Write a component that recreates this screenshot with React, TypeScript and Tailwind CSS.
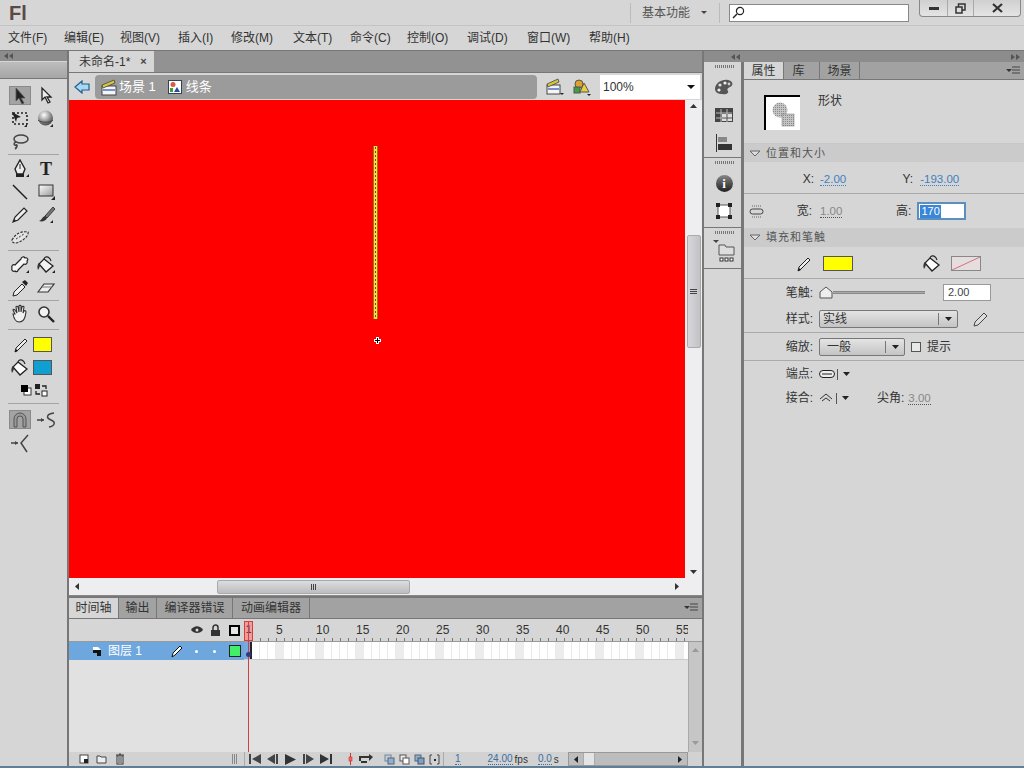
import React from "react";

const FONT = "font-['Liberation_Sans','Noto_Sans_CJK_SC',sans-serif]";

const S = ({ w = 20, h = 20, children, className = "" }: { w?: number; h?: number; children: React.ReactNode; className?: string }) => (
  <svg width={w} height={h} viewBox={`0 0 ${w} ${h}`} className={`shrink-0 ${className}`}>{children}</svg>
);
const Corner = () => <path d="M17 15l0 3-3 0z" fill="#222" />;

const Arrow = ({ fill = "#222" }: { fill?: string }) => (
  <S><path d="M6 2l0 13 3-3 3 6 2-1-3-5 4 0z" fill={fill} stroke="#555" strokeWidth=".8" /></S>
);
const Sub = () => <S><path d="M6 2l0 12 3-3 3 6 2-1-3-5 4 0z" fill="#eee" stroke="#222" strokeWidth="1.3" /></S>;
const Free = () => (
  <S>
    <rect x="3" y="4" width="14" height="11" fill="none" stroke="#222" strokeWidth="1.6" strokeDasharray="2 2" />
    <path d="M2 3l9 5-4 1-1 4z" fill="#222" /><Corner />
  </S>
);
const Ball = () => (
  <S>
    <defs><radialGradient id="bl" cx=".4" cy=".3" r=".8"><stop offset="0" stopColor="#fff" /><stop offset="1" stopColor="#333" /></radialGradient></defs>
    <circle cx="9.5" cy="9" r="7.5" fill="url(#bl)" /><path d="M2 11c3 3 12 3 15 0" fill="none" stroke="#444" /><Corner />
  </S>
);
const Lasso = () => <S><ellipse cx="11" cy="7" rx="7" ry="4" fill="none" stroke="#444" strokeWidth="1.5" /><path d="M6 10c-3 1-2 4 0 3s1 3-1 4" fill="none" stroke="#444" strokeWidth="1.5" /></S>;
const Pen = () => <S><path d="M10 1l5 9-2 5H7l-2-5z" fill="#eee" stroke="#222" strokeWidth="1.4" /><path d="M10 5v5" stroke="#222" /><rect x="6" y="15" width="8" height="3" fill="#222" /><path d="M19 15l0 3-3 0z" fill="#222" /></S>;
const Line = () => <S><path d="M3 3l14 14" stroke="#222" strokeWidth="1.5" /></S>;
const Rect = () => (
  <S>
    <defs><linearGradient id="rc" x1="0" y1="0" x2="1" y2="1"><stop offset="0" stopColor="#fff" /><stop offset="1" stopColor="#999" /></linearGradient></defs>
    <rect x="3" y="3" width="14" height="11" fill="url(#rc)" stroke="#333" /><path d="M19 14l0 4-4 0z" fill="#222" />
  </S>
);
const Pencil = () => <S><path d="M3 17l2-5 9-9 3 3-9 9z" fill="#eee" stroke="#222" strokeWidth="1.2" /><path d="M3 17l1.5-3 1.5 1.5z" fill="#222" /></S>;
const Brush = () => <S><path d="M17 2l-8 9 2 2 8-9z" fill="#777" stroke="#222" strokeWidth=".8" /><path d="M9 11c-3 1-3 4-6 5 3 1 7 0 8-3z" fill="#333" /><Corner /></S>;
const Deco = () => <S><path d="M2 12C6 5 12 3 18 4c1 3-4 9-12 11-2 0-4 0-4-3z" fill="#e4e4e4" stroke="#333" strokeWidth="1.2" strokeDasharray="2.5 1.3" /><path d="M6 11l8-5" stroke="#333" strokeDasharray="2 1.5" /></S>;
const Bone = () => (
  <S>
    <path d="M5 16c-2 1-4-1-3-3-1-2 1-4 3-3l6-6c0-2 3-3 4-1 2-1 4 2 2 3 1 2-1 4-3 3l-6 6c0 2-2 2-3 1z" fill="#f6f6f6" stroke="#222" strokeWidth="1.2" />
    <path d="M19 15l0 3-3 0z" fill="#222" />
  </S>
);
const Bucket = ({ c = "#f2f2f2", corner = true }: { c?: string; corner?: boolean }) => (
  <S>
    <path d="M8 6c-1-5 5-6 7 0" fill="none" stroke="#222" strokeWidth="1.1" />
    <path d="M8 4l9 7-7 6-7-8z" fill={c} stroke="#222" strokeWidth="1.3" />
    <path d="M3 8c-2 2-2 4-1 7 1-2 2-3 2-5z" fill="#333" />
    {corner && <path d="M19 15l0 3-3 0z" fill="#222" />}
  </S>
);
const Dropper = () => <S><path d="M3 18l1-4 8-8 3 3-8 8z" fill="#eee" stroke="#222" /><path d="M12 4l4 4 2-3-3-3z" fill="#222" /></S>;
const Eraser = () => <S><path d="M2 14l6-8h10l-6 8z" fill="#eee" stroke="#333" strokeWidth="1.2" /><path d="M6 9h10" stroke="#777" /></S>;
const Hand = () => <S><path d="M5 10L3 6c0-1 1-1 2 0l2 3-1-6c0-1 1-1 2 0l1 5V2c0-1 2-1 2 0v6l1-5c0-1 2-1 2 0l-1 6 1-2c1-1 2 0 2 1l-1 5c-1 3-3 5-6 5s-5-3-6-8z" fill="#f0f0f0" stroke="#333" strokeWidth="1.1" /></S>;
const Zoom = () => <S><circle cx="8" cy="8" r="5" fill="#f3f3f3" stroke="#333" strokeWidth="1.6" /><path d="M12 12l6 6" stroke="#222" strokeWidth="2.4" /></S>;
const SmallPen = () => <S w={16} h={18}><path d="M1 16l1-4 9-9 2 2-9 9z" fill="#eee" stroke="#222" /><path d="M1 16l1-3 2 2z" fill="#111" /></S>;
const Magnet = () => <S><path d="M4 17V9a6 6 0 0 1 12 0v8h-3V9a3 3 0 0 0-6 0v8z" fill="#999" stroke="#555" /></S>;
const Smooth = () => <S><path d="M1 10h7" stroke="#444" strokeWidth="1.5" /><path d="M8 10l-3-2v4z" fill="#444" /><path d="M18 3c-8 1-8 5-3 7s4 6-2 7" fill="none" stroke="#444" strokeWidth="1.5" /></S>;
const Straight = () => <S><path d="M1 10h7" stroke="#444" strokeWidth="1.5" /><path d="M8 10l-3-2v4z" fill="#444" /><path d="M18 2l-7 8 6 9" fill="none" stroke="#444" strokeWidth="1.5" /></S>;

const DblLeft = () => <svg width="9" height="6"><path d="M4 0v6L0 3zM9 0v6L5 3z" fill="#555" /></svg>;
const DblRight = () => <svg width="9" height="6"><path d="M0 0v6l4-3zM5 0v6l4-3z" fill="#555" /></svg>;

const Sep = ({ my = "" }: { my?: string }) => <div className={`h-px bg-[#a5a5a5] mx-[8px] w-[51px] ${my}`} />;
const ToolRow = ({ a, b, active }: { a: React.ReactNode; b?: React.ReactNode; active?: boolean }) => (
  <div className="h-[23px] flex items-center pl-[9px] gap-[4px]">
    <div className={`w-[22px] h-[19px] flex items-center justify-center ${active ? "bg-[#a3a3a3] border border-[#8a8a8a]" : ""}`}>{a}</div>
    <div className="w-[22px] h-[19px] flex items-center justify-center">{b}</div>
  </div>
);
const ColorRow = ({ icon, c }: { icon: React.ReactNode; c: string }) => (
  <div className="h-[23px] flex items-center justify-end pr-[15px] gap-[3px]">
    {icon}
    <div className="w-[19px] h-[15px] border border-[#555]" style={{ backgroundColor: c }} />
  </div>
);

const Toolbar = () => (
  <div className="w-[67px] shrink-0 flex flex-col bg-[#d6d6d6] h-full">
    <div className="h-[10px] bg-[#8c8c8c] flex items-center pl-[4px]"><DblLeft /></div>
    <div className="h-[17px] mt-px bg-gradient-to-b from-[#bdbdbd] to-[#a6a6a6] border-b border-[#777]" />
    <div className="h-[5px]" />
    <ToolRow a={<Arrow />} b={<Sub />} active />
    <ToolRow a={<Free />} b={<Ball />} />
    <ToolRow a={<Lasso />} />
    <Sep my="mt-[1px] mb-[2px]" />
    <ToolRow a={<Pen />} b={<span className="font-['Liberation_Serif'] font-bold text-[18px] text-[#222] leading-none">T</span>} />
    <ToolRow a={<Line />} b={<Rect />} />
    <ToolRow a={<Pencil />} b={<Brush />} />
    <ToolRow a={<Deco />} />
    <Sep my="mt-[1px] mb-[2px]" />
    <ToolRow a={<Bone />} b={<Bucket />} />
    <ToolRow a={<Dropper />} b={<Eraser />} />
    <Sep my="mt-[1px] mb-[1px]" />
    <ToolRow a={<Hand />} b={<Zoom />} />
    <Sep my="mt-[4px] mb-[3px]" />
    <ColorRow icon={<SmallPen />} c="#ffff00" />
    <ColorRow icon={<Bucket c="#fff" corner={false} />} c="#0f9fd0" />
    <div className="h-[22px] flex items-center pl-[20px] gap-[2px]">
      <S w={12} h={12}><rect x="4" y="4" width="7" height="7" fill="#fff" stroke="#333" /><rect x="1" y="1" width="7" height="7" fill="#000" /></S>
      <S w={14} h={14}><rect x="1" y="1" width="5" height="5" fill="#222" /><rect x="8" y="8" width="5" height="5" fill="#fff" stroke="#222" /><path d="M8 3h4v3M6 11H2V8" fill="none" stroke="#222" strokeWidth="1.3" /></S>
    </div>
    <Sep my="mt-[2px] mb-[4px]" />
    <ToolRow a={<Magnet />} b={<Smooth />} active />
    <ToolRow a={<Straight />} />
  </div>
);

const Tab = ({ t, w, active, cls = "" }: { t: string; w: string; active?: boolean; cls?: string }) => (
  <div className={`${w} h-full flex items-center justify-center text-[12px] border-r border-[#777] ${active ? "bg-[#d6d6d6] text-[#333]" : "text-[#333]"} ${cls}`}>{t}</div>
);

const MenuIcon = () => (
  <S w={14} h={10}><path d="M0 3l3 3 3-3z" fill="#333" /><path d="M6 1h8M6 4h8M6 7h8" stroke="#444" /></S>
);

const ClapIcon = () => (
  <S w={18} h={18}><rect x="2" y="8" width="14" height="9" fill="#f5f5f5" stroke="#444" /><rect x="3" y="11" width="12" height="2" fill="#7d8fd0" /><path d="M2 7l12-5 1 3-12 5z" fill="#d8c63a" stroke="#444" strokeWidth=".8" /></S>
);
const SymIcon = () => (
  <S w={14} h={14}><rect x=".5" y=".5" width="13" height="13" fill="#fff" stroke="#345" /><circle cx="5" cy="4.5" r="2.5" fill="#d85a3f" /><path d="M9 7l3 5H6z" fill="#2b4aa0" /><rect x="2" y="8" width="3" height="4" fill="#38a040" /></S>
);

const EditBar = () => (
  <div className="h-[27px] flex items-center bg-[#d6d6d6] shrink-0">
    <div className="w-[26px] flex justify-center">
      <S w={16} h={14}><path d="M1 7l7-6v3h7v6H8v3z" fill="#a9d6f2" stroke="#1e5f90" strokeWidth="1.2" /></S>
    </div>
    <div className="w-[442px] h-[24px] bg-[#9b9b9b] rounded-[4px] flex items-center pl-[5px] text-white text-[13px]">
      <ClapIcon />
      <span className="ml-[1px] text-[13px]">场景 1</span>
      <span className="ml-[12px]"><SymIcon /></span>
      <span className="ml-[4px]">线条</span>
    </div>
    <div className="w-[63px] flex items-center gap-[7px] pl-[8px]">
      <S w={20} h={20}><rect x="2" y="8" width="13" height="9" fill="#f5f5f5" stroke="#444" /><rect x="3" y="11" width="11" height="2" fill="#7d8fd0" /><path d="M2 7l11-5 1 3-11 5z" fill="#d8c63a" stroke="#444" strokeWidth=".8" /><path d="M15 16h4l-2 2z" fill="#222" /></S>
      <S w={20} h={20}><circle cx="7" cy="7" r="4" fill="#e0a030" stroke="#555" /><rect x="2" y="10" width="6" height="6" fill="#40a040" stroke="#555" /><path d="M12 6l5 9H8z" fill="#e8d040" stroke="#555" /><path d="M15 17h4l-2 2z" fill="#222" /></S>
    </div>
    <div className="w-[100px] h-[24px] bg-white flex items-center justify-between pl-[3px] pr-[4px] text-[12px] text-[#333]">
      <span>100%</span>
      <S w={10} h={6}><path d="M1 1h8L5 5z" fill="#111" /></S>
    </div>
    <div className="flex-1" />
  </div>
);

const Stage = () => (
  <div className="h-[478px] flex shrink-0">
    <div className="relative flex-1 bg-[#ff0000]">
      <div className="absolute left-[304px] top-[46px] w-[5px] h-[173px] border-x border-[#a07800] bg-[#f8dc50] bg-[radial-gradient(circle,#7a5200_0.9px,transparent_1.1px)] bg-[length:3px_4px]" />
      <svg className="absolute left-[305px] top-[237px]" width="7" height="7" viewBox="0 0 7 7">
        <path d="M3.5 0v7M0 3.5h7" stroke="#fff" strokeWidth="3" /><path d="M3.5 1v5M1 3.5h5" stroke="#000" />
      </svg>
    </div>
    <div className="w-[17px] bg-[#eeeef0] flex flex-col items-center">
      <div className="h-[12px] flex items-center"><svg width="7" height="5"><path d="M0 4h7L3.5 0z" fill="#333" /></svg></div>
      <div className="h-[123px]" />
      <div className="w-[14px] h-[113px] border border-[#aaa] rounded-[2px] bg-gradient-to-r from-[#d8d8dc] to-[#c2c2c6] flex flex-col items-center justify-center gap-px">
        <div className="h-px w-[7px] bg-[#444]" /><div className="h-px w-[7px] bg-[#444]" /><div className="h-px w-[7px] bg-[#444]" />
      </div>
      <div className="flex-1" />
      <div className="h-[12px] flex items-center"><svg width="7" height="5"><path d="M0 0h7L3.5 4z" fill="#333" /></svg></div>
    </div>
  </div>
);

const HScroll = () => (
  <div className="h-[18px] bg-[#eeeef0] flex items-center shrink-0 border-b border-[#888]">
    <div className="w-[148px] pl-[6px]"><svg width="5" height="7"><path d="M4 0v7L0 3.5z" fill="#333" /></svg></div>
    <div className="w-[193px] h-[14px] border border-[#aaa] rounded-[2px] bg-gradient-to-b from-[#dddde0] to-[#bdbdc0] flex items-center justify-center gap-px">
      <div className="w-px h-[6px] bg-[#444]" /><div className="w-px h-[6px] bg-[#444]" /><div className="w-px h-[6px] bg-[#444]" />
    </div>
    <div className="flex-1" />
    <div className="w-[27px] flex"><svg width="5" height="7"><path d="M0 0v7l4-3.5z" fill="#333" /></svg></div>
  </div>
);

const FRAMES = Array.from({ length: 56 }, (_, i) => i + 1);
const LABELS = [5, 10, 15, 20, 25, 30, 35, 40, 45, 50, 55];

const Timeline = () => (
  <div className="relative flex-1 flex flex-col bg-[#e1e1e1] min-h-0 overflow-hidden">
    <div className="h-[21px] bg-[#a2a2a2] border-b border-[#777] flex items-stretch shrink-0">
      <Tab t="时间轴" w="w-[50px]" active />
      <Tab t="输出" w="w-[38px]" />
      <Tab t="编译器错误" w="w-[76px]" />
      <Tab t="动画编辑器" w="w-[77px]" />
      <div className="flex-1 flex items-center justify-end pr-[4px]"><MenuIcon /></div>
    </div>
    <div className="h-[23px] bg-[#d6d6d6] flex shrink-0 border-b border-[#999]">
      <div className="w-[175px] flex items-center justify-end pr-[2px] gap-[7px]">
        <S w={12} h={10}><path d="M0 5c3-5 9-5 12 0-3 4-9 4-12 0z" fill="#333" /><circle cx="6" cy="5" r="1.5" fill="#ddd" /></S>
        <S w={11} h={12}><path d="M3 6V3.5a2.5 2.5 0 0 1 5 0V6" fill="none" stroke="#333" strokeWidth="1.5" /><rect x="1" y="6" width="9" height="6" fill="#333" /></S>
        <div className="w-[11px] h-[11px] border-2 border-black bg-[#e6e6e6] mr-[2px] ml-[1px]" />
      </div>
      <div className="relative flex-1 overflow-hidden">
        <div className="flex text-[12px] text-[#333] h-[19px] items-center pt-[2px]">
          <div className="w-[32px] shrink-0" />
          {LABELS.map((n) => (
            <div key={n} className="w-[40px] shrink-0 leading-none">{n}</div>
          ))}
        </div>
        <div className="h-[3px] bg-[repeating-linear-gradient(90deg,#777_0,#777_1px,transparent_1px,transparent_8px)]" />
        <div className="absolute left-0 top-[2px] w-[9px] h-[20px] bg-[#f59a9a] border border-[#d04040] text-[11px] leading-[14px] text-center text-[#333]">1</div>
      </div>
      <div className="w-[14px]" />
    </div>
    <div className="flex-1 flex min-h-0">
      <div className="flex-1 min-w-0 flex flex-col">
        <div className="h-[18px] flex shrink-0">
          <div className="w-[175px] bg-[#6ea6de] flex items-center text-white text-[12px] shrink-0">
            <div className="w-[22px]" />
            <S w={12} h={12}><path d="M2 5h8v6H6V8H2z" fill="#111" /><path d="M2 5h8L7 2H2z" fill="#fff" /></S>
            <span className="ml-[5px]">图层 1</span>
            <span className="ml-[28px]"><S w={14} h={14}><path d="M2 13l1-4 7-7 2 2-7 7z" fill="#fff" stroke="#111" /></S></span>
            <span className="ml-[11px] w-[3px] h-[3px] rounded-full bg-white" />
            <span className="ml-[15px] w-[3px] h-[3px] rounded-full bg-white" />
            <span className="ml-[13px] w-[12px] h-[12px] border border-[#222] bg-[#44ee66]" />
          </div>
          <div className="flex flex-1 min-w-0 overflow-hidden bg-white border-b border-[#ccc]">
            {FRAMES.map((f) => (
              <div
                key={f}
                className={`w-[8px] shrink-0 h-full border-r border-[#ebebeb] ${
                  f === 1 ? "bg-[#7aa9e0] border-r-2 border-r-[#223]" : f % 5 === 0 ? "bg-[#ececec]" : "bg-white"
                }`}
              />
            ))}
          </div>
        </div>
        <div className="flex-1 bg-[#e1e1e1]" />
      </div>
      <div className="w-[14px] bg-[#c6c6c6] border-l border-[#aaa] flex flex-col justify-between items-center py-[6px]">
        <svg width="7" height="5"><path d="M0 4h7L3.5 0z" fill="#999" /></svg>
        <svg width="7" height="5"><path d="M0 0h7L3.5 4z" fill="#999" /></svg>
      </div>
    </div>
    <div className="h-[14px] bg-[#d2d2d2] flex items-center shrink-0 text-[10px] text-[#333]">
      <div className="w-[175px] flex items-center pl-[10px] gap-[8px] shrink-0">
        <S w={10} h={10}><rect x="1" y="1" width="8" height="8" fill="#fff" stroke="#444" /><rect x="5" y="5" width="4" height="4" fill="#222" /></S>
        <span className="ml-[-1px]"><S w={11} h={10}><path d="M1 2h3l1 1h5v6H1z" fill="#eee" stroke="#444" /></S></span>
        <S w={10} h={12}><rect x="2" y="3" width="6" height="8" fill="#eee" stroke="#333" /><path d="M1 2h8M4 1h2M4 4v6M6 4v6" stroke="#333" /></S>
        <div className="flex-1" />
        <div className="w-[6px] h-[10px] mr-[6px] bg-[repeating-linear-gradient(90deg,#888_0,#888_1px,transparent_1px,transparent_2px)]" />
      </div>
      <div className="flex items-center pl-[3px] gap-[5px] w-[95px] shrink-0 border-l border-[#aaa] h-full">
        <svg width="13" height="10"><path d="M1 0v10h2V0zM13 0v10L4 5z" fill="#444" /></svg>
        <svg width="13" height="10"><path d="M10 0v10h2V0zM9 0v10L1 5z" fill="#444" /></svg>
        <svg width="13" height="11"><path d="M1 0v11l11-5.5z" fill="#333" /></svg>
        <svg width="13" height="10"><path d="M1 0v10h2V0zM4 0v10l8-5z" fill="#444" /></svg>
        <svg width="13" height="10"><path d="M0 0v10l9-5zM10 0v10h2V0z" fill="#333" /></svg>
      </div>
      <div className="flex items-center w-[39px] shrink-0 gap-[5px] pl-[9px]">
        <svg width="5" height="12"><path d="M2.5 0v12" stroke="#c33" /><rect x="1" y="4" width="3" height="4" fill="#e66" stroke="#c33" strokeWidth=".6" /></svg>
        <svg width="16" height="10"><path d="M2 7V3h9M9 8H3" fill="none" stroke="#333" strokeWidth="2" /><path d="M11 0l4 3-4 4z" fill="#333" /></svg>
      </div>
      <div className="flex items-center gap-[4px] pl-[6px] w-[65px] shrink-0">
        <svg width="11" height="11"><rect x="1" y="1" width="6" height="6" fill="#ccc" stroke="#68a" /><rect x="4" y="4" width="6" height="6" fill="#8fb0d0" stroke="#567" /></svg>
        <svg width="11" height="11"><rect x="1" y="1" width="6" height="6" fill="#eee" stroke="#555" /><rect x="4" y="4" width="6" height="6" fill="#fff" stroke="#555" /></svg>
        <svg width="11" height="11"><rect x="1" y="1" width="6" height="6" fill="#8fb0d0" stroke="#567" /><rect x="4" y="4" width="6" height="6" fill="#7f9fc5" stroke="#456" /></svg>
        <svg width="11" height="11"><path d="M3 1H1v9h2M8 1h2v9H8" fill="none" stroke="#444" /><rect x="5" y="5" width="2" height="2" fill="#222" /></svg>
      </div>
      <div className="flex items-center text-[10px] w-[125px] shrink-0 border-l border-[#aaa] h-full">
        <span className="ml-[11px] text-[#3a6ea5] border-b border-dotted border-[#3a6ea5] leading-[11px]">1</span>
        <span className="ml-[27px] text-[#3a6ea5] border-b border-dotted border-[#3a6ea5] leading-[11px]">24.00</span>
        <span className="ml-[2px]">fps</span>
        <span className="ml-[10px] text-[#3a6ea5] border-b border-dotted border-[#3a6ea5] leading-[11px]">0.0</span>
        <span className="ml-[2px]">s</span>
      </div>
      <div className="w-[120px] h-full bg-[#bdbdbd] flex items-center border border-[#999] shrink-0">
        <div className="w-[14px] flex justify-center"><svg width="5" height="7"><path d="M4 0v7L0 3.5z" fill="#222" /></svg></div>
        <div className="w-[12px] h-full bg-[#e4e4e4] border-x border-[#aaa]" />
        <div className="flex-1" />
        <div className="w-[14px] flex justify-center"><svg width="5" height="7"><path d="M0 0v7l4-3.5z" fill="#222" /></svg></div>
      </div>
      <div className="flex-1" />
    </div>
    <div className="absolute left-[179px] top-[23px] w-px h-[131px] bg-[#d04040]" />
    <div className="absolute left-[177px] top-[54px] w-[5px] h-[5px] rounded-full bg-[#333a7a]" />
  </div>
);

const DockGroup = ({ h, children }: { h: string; children: React.ReactNode }) => (
  <div className={`${h} border-b border-[#777] flex flex-col items-center pt-[3px] pl-[3px] shrink-0`}>
    <div className="w-[19px] h-[3px] mb-[5px] bg-[repeating-linear-gradient(90deg,#777_0,#777_1px,transparent_1px,transparent_2px)]" />
    {children}
  </div>
);
const DockCell = ({ children }: { children: React.ReactNode }) => <div className="h-[28px] flex items-center justify-center">{children}</div>;

const Dock = () => (
  <div className="w-[37px] shrink-0 bg-[#d6d6d6] flex flex-col">
    <DockGroup h="h-[96px]">
      <DockCell><S w={20} h={18}><path d="M1 11c0-6 7-10 13-9 5 1 6 5 2 7-3 1-3 3-2 4 1 2-2 4-6 3-4 0-7-2-7-5z" fill="#555" /><circle cx="11" cy="5" r="1.6" fill="#eee" /><circle cx="6" cy="7" r="1.6" fill="#ddd" /><circle cx="5" cy="12" r="1.6" fill="#eee" /><circle cx="15" cy="6" r="1.4" fill="#ccc" /></S></DockCell>
      <DockCell><S w={18} h={14}><rect width="18" height="14" fill="#444" /><path d="M1 5h16M1 10h16M6 1v13M12 1v13" stroke="#bbb" /><rect x="7" y="6" width="10" height="7" fill="#ddd" /><path d="M7 10h10M12 6v7" stroke="#555" /></S></DockCell>
      <DockCell><S w={16} h={18}><path d="M.5 0v18" stroke="#333" /><rect x="2" y="3" width="9" height="5" fill="#888" /><rect x="2" y="10" width="14" height="6" fill="#333" /></S></DockCell>
    </DockGroup>
    <DockGroup h="h-[70px]">
      <DockCell>
        <div className="w-[17px] h-[17px] rounded-full bg-gradient-to-b from-[#888] to-[#222] flex items-center justify-center text-white font-bold text-[13px] font-['Liberation_Serif'] leading-none">i</div>
      </DockCell>
      <DockCell><S w={16} h={16}><rect x="2" y="2" width="12" height="12" fill="#fff" stroke="#555" /><path d="M0 0h4v4H0zM12 0h4v4h-4zM0 12h4v4H0zM12 12h4v4h-4z" fill="#222" /></S></DockCell>
    </DockGroup>
    <DockGroup h="h-[41px]">
      <S w={22} h={26}><path d="M0 1h6L3 4z" fill="#444" /><path d="M6 6h6l1 2h8v8H6z" fill="#ddd" stroke="#555" /><rect x="7" y="19" width="3" height="3" fill="#fff" stroke="#333" /><rect x="12" y="19" width="3" height="3" fill="#fff" stroke="#333" /><rect x="17" y="19" width="3" height="3" fill="#fff" stroke="#333" /></S>
    </DockGroup>
  </div>
);

const SectionHead = ({ t, h }: { t: string; h: string }) => (
  <div className={`${h} bg-[#cbcbcb] flex items-center pl-[5px] shrink-0 text-[11px] text-[#555] tracking-[1px]`}>
    <svg width="12" height="7" viewBox="0 0 12 7"><path d="M1 1h10L6 6z" fill="#ddd" stroke="#666" /></svg>
    <span className="ml-[5px]">{t}</span>
  </div>
);
const Blue = ({ t, cls = "" }: { t: string; cls?: string }) => (
  <span className={`text-[11.5px] leading-[12px] text-[#3f7fc0] border-b border-dotted border-[#3f7fc0] ${cls}`}>{t}</span>
);
const Lbl = ({ t, w }: { t: string; w: string }) => <span className={`${w} text-[12px] text-[#333] text-right`}>{t}</span>;

const Props = () => (
  <div className="flex-1 min-w-0 flex flex-col bg-[#d6d6d6] border-l-[3px] border-[#777]">
    <div className="h-[18px] bg-[#a2a2a2] border-b border-[#777] flex items-stretch shrink-0">
      <Tab t="属性" w="w-[40px]" active />
      <Tab t="库" w="w-[36px]" cls="pr-[6px]" />
      <Tab t="场景" w="w-[40px]" />
      <div className="flex-1 flex items-center justify-end pr-[4px]"><MenuIcon /></div>
    </div>
    <div className="h-[64px] flex shrink-0 pl-[20px] pt-[15px] border-b border-[#c8c8c8]">
      <div className="w-[36px] h-[35px] bg-white border-l-2 border-t-2 border-black flex items-center justify-center">
        <S w={24} h={26}>
          <defs><pattern id="ck" width="2" height="2" patternUnits="userSpaceOnUse"><rect width="2" height="2" fill="#c4c4c4" /><rect width="1" height="1" fill="#8c8c8c" /></pattern></defs>
          <circle cx="9" cy="9" r="7.5" fill="url(#ck)" /><rect x="11" y="13" width="12" height="12" fill="url(#ck)" stroke="#777" strokeWidth=".5" />
        </S>
      </div>
      <span className="ml-[18px] text-[12px] text-[#333] leading-[14px] mt-[-1px]">形状</span>
    </div>
    <SectionHead t="位置和大小" h="h-[18px]" />
    <div className="h-[32px] flex items-center shrink-0 border-b border-[#aaa] pt-[3px]">
      <Lbl t="X:" w="w-[70px]" />
      <Blue t="-2.00" cls="ml-[6px]" />
      <Lbl t="Y:" w="w-[67px]" />
      <Blue t="-193.00" cls="ml-[7px]" />
    </div>
    <div className="h-[34px] flex items-center shrink-0">
      <span className="ml-[4px] w-[17px] flex justify-center"><svg width="15" height="13"><rect x="1" y="4" width="13" height="5" rx="2.5" fill="none" stroke="#444" /><path d="M3 1h9M3 12h9" stroke="#666" strokeDasharray="1 1" /></svg></span>
      <Lbl t="宽:" w="w-[47px]" />
      <span className="ml-[8px] text-[11.5px] leading-[12px] text-[#888] border-b border-dotted border-[#555]">1.00</span>
      <Lbl t="高:" w="w-[69px]" />
      <div className="ml-[6px] w-[49px] h-[18px] bg-white border-2 border-[#5a8fc0] flex items-center pl-[1px]">
        <span className="bg-[#3a86d8] text-white text-[11px] leading-[13px] px-px">170</span>
      </div>
    </div>
    <SectionHead t="填充和笔触" h="h-[19px]" />
    <div className="h-[32px] flex items-center shrink-0 border-b border-[#aaa] pt-[2px]">
      <span className="ml-[53px]"><SmallPen /></span>
      <div className="ml-[10px] w-[30px] h-[15px] bg-[#ffff00] border border-[#555]" />
      <span className="ml-[69px]"><Bucket c="#fff" corner={false} /></span>
      <div className="ml-[9px] w-[30px] h-[15px] border border-[#888] bg-[#e6dede]">
        <svg width="28" height="13"><path d="M0 13L28 0" stroke="#d07080" /></svg>
      </div>
    </div>
    <div className="h-[27px] flex items-center shrink-0">
      <Lbl t="笔触:" w="w-[69px]" />
      <div className="ml-[6px] w-[106px] flex items-center">
        <svg width="14" height="13" className="shrink-0"><path d="M1 12V6l6-5 6 5v6z" fill="#eee" stroke="#555" /></svg>
        <div className="flex-1 h-[3px] bg-[#aaa] border-y border-[#888]" />
      </div>
      <div className="ml-[18px] w-[48px] h-[17px] bg-white border border-[#999] text-[11px] leading-[15px] pl-[4px] text-[#444]">2.00</div>
    </div>
    <div className="h-[27px] flex items-center shrink-0 border-b border-[#aaa]">
      <Lbl t="样式:" w="w-[69px]" />
      <div className="ml-[6px] w-[139px] h-[18px] border border-[#777] rounded-[2px] bg-gradient-to-b from-[#e4e4e4] to-[#c4c4c4] flex items-center text-[12px] text-[#333] pl-[3px]">
        <span className="flex-1">实线</span>
        <span className="w-px h-[12px] bg-[#777]" />
        <svg width="18" height="6"><path d="M6 1h7L9.5 5z" fill="#222" /></svg>
      </div>
      <span className="ml-[15px]"><S w={16} h={16}><path d="M1 15l1-4 9-9 3 3-9 9z" fill="#ddd" stroke="#444" /></S></span>
    </div>
    <div className="h-[28px] flex items-center shrink-0 border-b border-[#aaa]">
      <Lbl t="缩放:" w="w-[69px]" />
      <div className="ml-[6px] w-[86px] h-[18px] border border-[#777] rounded-[2px] bg-gradient-to-b from-[#e4e4e4] to-[#c4c4c4] flex items-center text-[12px] text-[#333] pl-[7px]">
        <span className="flex-1">一般</span>
        <span className="w-px h-[12px] bg-[#777]" />
        <svg width="18" height="6"><path d="M6 1h7L9.5 5z" fill="#222" /></svg>
      </div>
      <div className="ml-[6px] w-[10px] h-[10px] border border-[#555] bg-[#e8e8e8]" />
      <span className="ml-[6px] text-[12px] text-[#333]">提示</span>
    </div>
    <div className="h-[26px] flex items-center shrink-0">
      <Lbl t="端点:" w="w-[69px]" />
      <svg width="16" height="8" className="ml-[6px]"><rect x=".5" y=".5" width="15" height="7" rx="3.5" fill="#eee" stroke="#222" /><path d="M3 4h10" stroke="#222" /></svg>
      <span className="ml-[2px] w-px h-[11px] bg-[#555]" />
      <svg width="8" height="6" className="ml-[5px]"><path d="M0 1h7L3.5 5z" fill="#222" /></svg>
    </div>
    <div className="h-[24px] flex items-center shrink-0 pb-[2px]">
      <Lbl t="接合:" w="w-[69px]" />
      <svg width="15" height="10" className="ml-[6px]"><path d="M1 6l6-5 6 5M3 8l4-3 4 3" fill="none" stroke="#333" /></svg>
      <span className="ml-[2px] w-px h-[11px] bg-[#555]" />
      <svg width="8" height="6" className="ml-[5px]"><path d="M0 1h7L3.5 5z" fill="#222" /></svg>
      <span className="ml-[27px] text-[12px] text-[#333]">尖角:</span>
      <span className="ml-[4px] text-[11.5px] leading-[12px] text-[#888] border-b border-dotted border-[#555]">3.00</span>
    </div>
  </div>
);

const MENU: [string, string][] = [
  ["文件(F)", "w-[56px]"],
  ["编辑(E)", "w-[56px]"],
  ["视图(V)", "w-[58px]"],
  ["插入(I)", "w-[53px]"],
  ["修改(M)", "w-[62px]"],
  ["文本(T)", "w-[57px]"],
  ["命令(C)", "w-[57px]"],
  ["控制(O)", "w-[60px]"],
  ["调试(D)", "w-[60px]"],
  ["窗口(W)", "w-[62px]"],
  ["帮助(H)", "w-[60px]"],
];

export default function App() {
  return (
    <div className={`w-[1024px] h-[768px] overflow-hidden flex flex-col bg-[#d6d6d6] text-[#333] ${FONT}`}>
      <div className="h-[25px] flex items-center shrink-0 relative">
        <span className="ml-[9px] w-[621px] font-['Liberation_Sans'] font-bold text-[20px] leading-none text-[#5b4a44] shrink-0">Fl</span>
        <div className="w-px h-[20px] bg-[#bbb]" />
        <span className="ml-[11px] text-[12px] text-[#555]">基本功能</span>
        <svg width="6" height="4" className="ml-[11px]"><path d="M0 0h6L3 3z" fill="#444" /></svg>
        <div className="ml-[12px] w-px h-[20px] bg-[#bbb]" />
        <div className="ml-[9px] w-[180px] h-[18px] bg-white border border-[#888] flex items-center pl-[2px]">
          <svg width="13" height="13"><circle cx="8" cy="5" r="3.6" fill="none" stroke="#222" strokeWidth="1.2" /><path d="M5 8l-4 4" stroke="#222" strokeWidth="1.4" /></svg>
        </div>
        <div className="ml-[10px] mb-[8px] w-[102px] h-[17px] flex border border-t-0 border-[#888] rounded-b-[4px] bg-gradient-to-b from-[#d0d0d0] to-[#e4e4e4]">
          <div className="w-[28px] flex items-center justify-center border-r border-[#aaa]"><div className="w-[10px] h-[3px] bg-[#333]" /></div>
          <div className="w-[26px] flex items-center justify-center border-r border-[#aaa]">
            <svg width="11" height="11"><rect x="3.5" y="1" width="6.5" height="6" fill="none" stroke="#333" strokeWidth="1.5" /><rect x="1" y="4" width="6" height="6" fill="#ddd" stroke="#333" strokeWidth="1.5" /></svg>
          </div>
          <div className="flex-1 flex items-center justify-center">
            <svg width="11" height="10"><path d="M1 1l9 8M10 1L1 9" stroke="#333" strokeWidth="2.2" /></svg>
          </div>
        </div>
      </div>
      <div className="h-[25px] flex items-center pl-[8px] text-[12px] text-[#333] shrink-0 border-t border-[#c4c4c4]">
        {MENU.map(([m, w]) => (
          <span key={m} className={`${w} shrink-0`}>{m}</span>
        ))}
      </div>
      <div className="h-[716px] flex border-t border-[#777] shrink-0">
        <Toolbar />
        <div className="w-[2px] bg-[#777] shrink-0" />
        <div className="w-[633px] flex flex-col shrink-0">
          <div className="h-[22px] bg-[#929292] flex shrink-0 border-b border-[#777]">
            <div className="w-[85px] bg-[#d6d6d6] flex items-center text-[12px] pl-[10px] text-[#333]">
              <span>未命名-1*</span>
              <span className="ml-[10px] text-[11px] font-bold text-[#444]">×</span>
            </div>
          </div>
          <EditBar />
          <Stage />
          <HScroll />
          <div className="h-[2px] bg-[#777] shrink-0" />
          <Timeline />
        </div>
        <div className="flex-1 flex flex-col border-l-[2px] border-[#777] min-w-0">
          <div className="h-[11px] bg-[#8c8c8c] flex items-center justify-between pl-[27px] pr-[4px] shrink-0">
            <DblLeft /><DblRight />
          </div>
          <div className="flex-1 flex min-h-0">
            <Dock />
            <Props />
          </div>
        </div>
      </div>
      <div className="h-[2px] bg-[#5f7f98] shrink-0" />
    </div>
  );
}
